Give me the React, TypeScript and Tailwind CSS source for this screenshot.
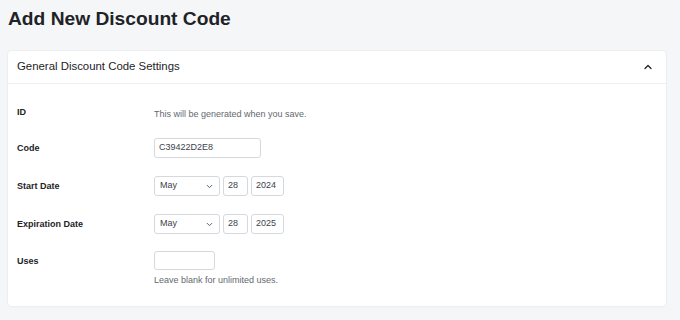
import { ChevronUp, ChevronDown } from 'lucide-react';

const Select = ({ value }: { value: string }) => (
  <div className="w-[66px] h-[20px] border border-[#d5d8dd] rounded-[3px] bg-white flex items-center justify-between pl-[5px] pr-[5px] text-[9px] text-[#3c434a]">
    <span>{value}</span>
    <ChevronDown className="w-[9px] h-[9px] text-[#50575e]" strokeWidth={2.5} />
  </div>
);

const Box = ({ value, w }: { value?: string; w: string }) => (
  <div className={`${w} h-[20px] border border-[#d5d8dd] rounded-[3px] bg-white flex items-center px-[4px] text-[9px] text-[#3c434a]`}>
    {value}
  </div>
);

const Row = ({ label, children }: { label: string; children: React.ReactNode }) => (
  <div className="flex items-center h-[20px]">
    <div className="w-[137px] pt-[1px] text-[9px] font-semibold text-[#1d2327]">{label}</div>
    <div>{children}</div>
  </div>
);

export default function App() {
  return (
    <div
      className="w-[680px] h-[320px] bg-[#f5f6f8] px-2 overflow-hidden"
      style={{ fontFamily: '"Liberation Sans", Arial, sans-serif' }}
    >
      <h1 className="pt-[7px] text-[19.2px] leading-[24px] font-bold text-[#1d2327]">
        Add New Discount Code
      </h1>

      <div className="mt-[20px] w-[658px] bg-white rounded-[4px] shadow-[0_0_0_1px_#eceef2,0_1px_2px_rgba(0,0,0,0.04)]">
        <div className="h-[33px] flex items-center justify-between pl-[9px] pr-[12px] border-b border-[#eef0f3]">
          <span className="text-[11.4px] text-[#1d2327]">General Discount Code Settings</span>
          <ChevronUp className="w-[12px] h-[12px] text-[#1d2327]" strokeWidth={2.5} />
        </div>

        <div className="pl-[9px] pt-[18px] pb-[18px] flex flex-col">
          <Row label="ID">
            <span className="pt-[1px] text-[9px] text-[#646970]">This will be generated when you save.</span>
          </Row>
          <div className="h-[16px]" />
          <Row label="Code">
            <Box value="C39422D2E8" w="w-[107px]" />
          </Row>
          <div className="h-[18px]" />
          <Row label="Start Date">
            <div className="flex items-center gap-[3px]">
              <Select value="May" />
              <Box value="28" w="w-[25px]" />
              <Box value="2024" w="w-[33px]" />
            </div>
          </Row>
          <div className="h-[18px]" />
          <Row label="Expiration Date">
            <div className="flex items-center gap-[3px]">
              <Select value="May" />
              <Box value="28" w="w-[25px]" />
              <Box value="2025" w="w-[33px]" />
            </div>
          </Row>
          <div className="h-[17px]" />
          <div className="flex">
            <div className="w-[137px] text-[9px] font-semibold text-[#1d2327] pt-[4px]">Uses</div>
            <div className="flex flex-col">
              <div className="w-[61px] h-[19px] border border-[#d5d8dd] rounded-[3px] bg-white" />
              <span className="mt-[4px] text-[9px] text-[#646970]">Leave blank for unlimited uses.</span>
            </div>
          </div>
        </div>
      </div>
    </div>
  );
}
